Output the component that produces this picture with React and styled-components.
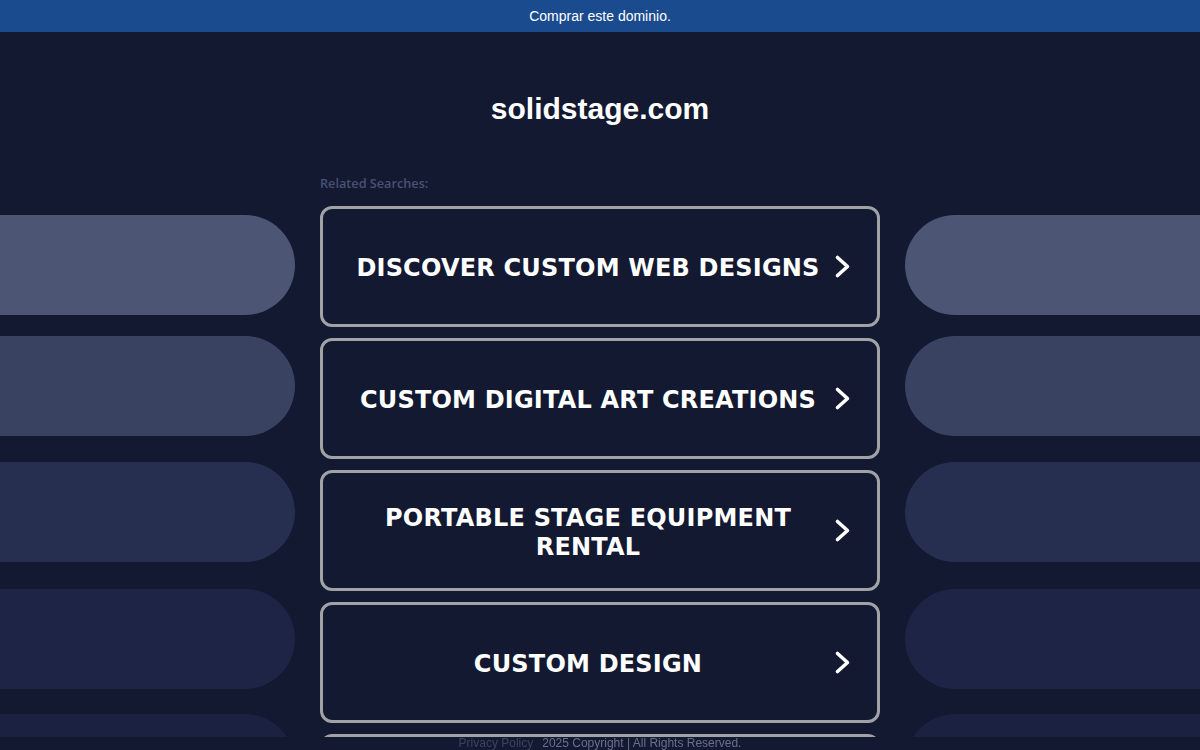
import React from "react";
import styled, { createGlobalStyle } from "styled-components";

const Global = createGlobalStyle`
  html, body { margin: 0; padding: 0; background: #121931; }
  body { overflow: hidden; }
  * { box-sizing: border-box; }
`;

const Page = styled.div`
  min-height: 100vh;
  background: #121931;
  font-family: "Liberation Sans", Arial, sans-serif;
`;

const TopBar = styled.a`
  display: flex;
  align-items: center;
  justify-content: center;
  height: 32px;
  background: #1b4b8f;
  color: #ffffff;
  font-size: 14px;
  text-decoration: none;
`;

const Title = styled.h1`
  margin: 0;
  padding-top: 60px;
  height: 138px;
  text-align: center;
  color: #ffffff;
  font-size: 30px;
  font-weight: 700;
  line-height: 34px;
`;

const Content = styled.div`
  display: grid;
  grid-template-columns: 1fr 560px 1fr;
  column-gap: 25px;
`;

const SideColumn = styled.div`
  display: flex;
  flex-direction: column;
  padding-top: 45px;
`;

const Pill = styled.div`
  height: 100px;
  margin-top: ${(p) => p.$gap}px;
  background: ${(p) => p.$color};
  border-radius: ${(p) => (p.$side === "left" ? "0 50px 50px 0" : "50px 0 0 50px")};
`;

const Center = styled.div`
  display: flex;
  flex-direction: column;
`;

const Label = styled.div`
  height: 36px;
  padding-top: 5px;
  color: #4a5273;
  font-family: "Open Sans", Lato, sans-serif;
  font-weight: 600;
  font-size: 12.7px;
  line-height: 16px;
`;

const Box = styled.a`
  display: flex;
  align-items: center;
  height: 121px;
  margin-bottom: 11px;
  padding: 0 26px 0 27px;
  border: 3px solid #a1a2a6;
  border-radius: 12px;
  background: #121931;
  text-decoration: none;
`;

const BoxText = styled.span`
  flex: 1;
  padding-top: 4px;
  text-align: center;
  color: #ffffff;
  font-family: "DejaVu Sans", Verdana, sans-serif;
  font-weight: 700;
  font-size: 24px;
  letter-spacing: 0.2px;
  line-height: 29px;
  text-transform: uppercase;
`;

const Chevron = styled.svg`
  flex: none;
  width: 17px;
  height: 25px;
  margin-left: 8px;
`;

const Footer = styled.div`
  position: fixed;
  left: 0;
  right: 0;
  bottom: 0;
  height: 13px;
  display: flex;
  justify-content: center;
  align-items: center;
  gap: 9px;
  background: #121931;
  font-size: 12px;
  line-height: 13px;
`;

const FooterLink = styled.span`
  color: ${(p) => p.$color};
`;

const pills = [
  { color: "#4c5573", gap: 0 },
  { color: "#3a4262", gap: 21 },
  { color: "#272f50", gap: 26 },
  { color: "#1d2445", gap: 27 },
  { color: "#1b2241", gap: 25 },
];

const items = [
  "Discover Custom Web Designs",
  "Custom Digital Art Creations",
  "Portable Stage Equipment Rental",
  "Custom Design",
];

function Side({ side }) {
  return (
    <SideColumn>
      {pills.map((p, i) => (
        <Pill key={i} $color={p.color} $gap={p.gap} $side={side} />
      ))}
    </SideColumn>
  );
}

function ChevronIcon() {
  return (
    <Chevron viewBox="0 0 17 25">
      <path
        d="M3.5 3.5 L13.5 12.5 L3.5 21.5"
        fill="none"
        stroke="#ffffff"
        strokeWidth="3.6"
        strokeLinecap="round"
        strokeLinejoin="round"
      />
    </Chevron>
  );
}

export default function App() {
  return (
    <Page>
      <Global />
      <TopBar href="#">Comprar este dominio.</TopBar>
      <Title>solidstage.com</Title>
      <Content>
        <Side side="left" />
        <Center>
          <Label>Related Searches:</Label>
          {items.map((t) => (
            <Box key={t} href="#">
              <BoxText>{t}</BoxText>
              <ChevronIcon />
            </Box>
          ))}
          <Box href="#" aria-hidden="true" />
        </Center>
        <Side side="right" />
      </Content>
      <Footer>
        <FooterLink $color="#3b4362">Privacy Policy</FooterLink>
        <FooterLink $color="#6a7089">2025 Copyright | All Rights Reserved.</FooterLink>
      </Footer>
    </Page>
  );
}
